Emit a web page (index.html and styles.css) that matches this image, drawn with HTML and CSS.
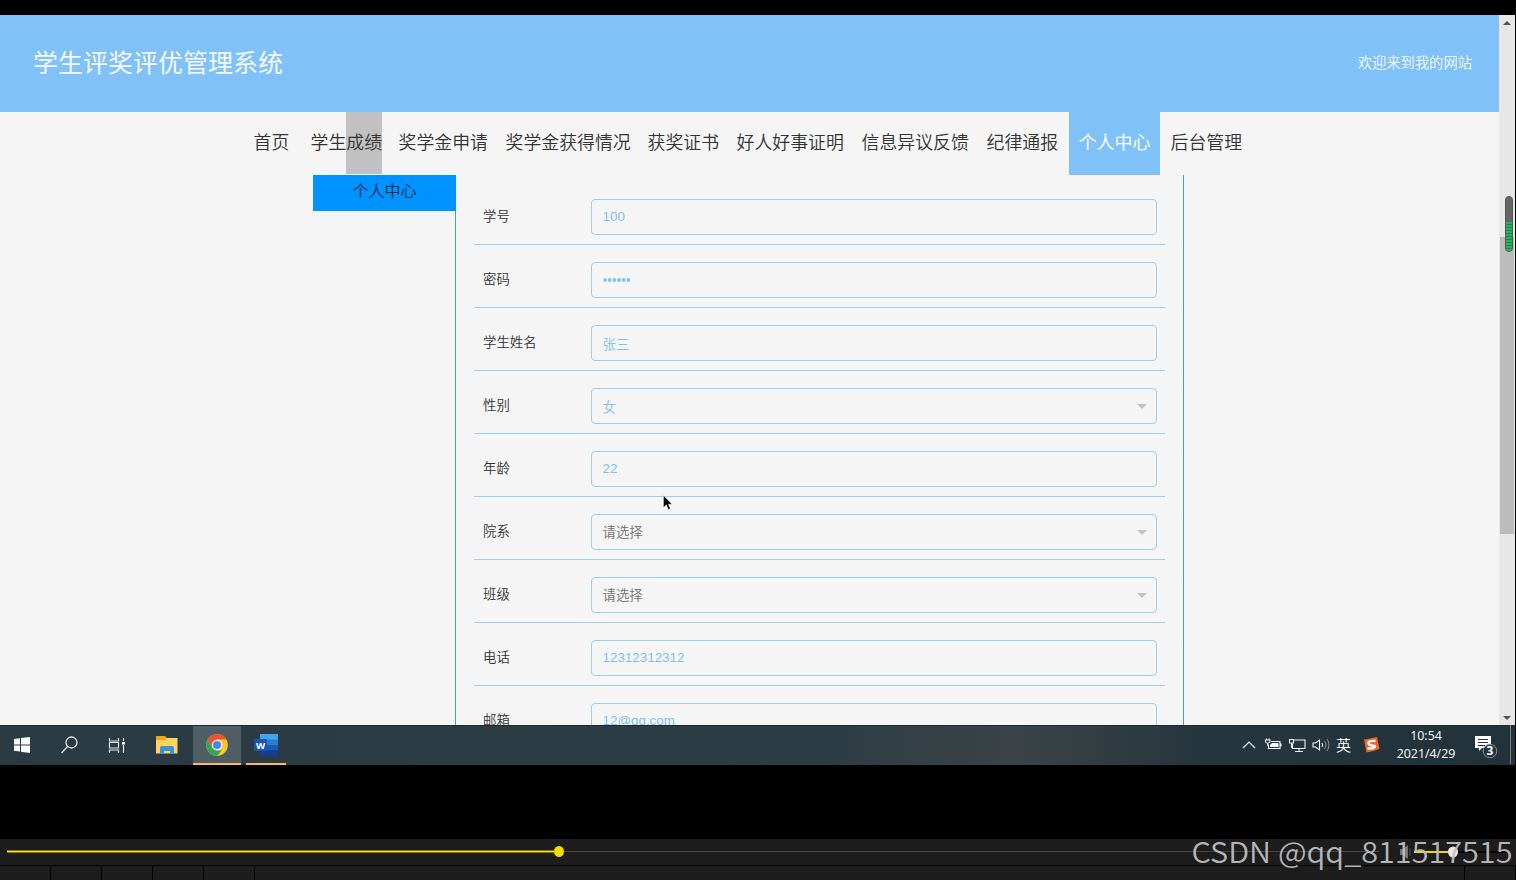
FILE: index.html
```html
<!DOCTYPE html>
<html lang="zh-CN">
<head>
<meta charset="utf-8">
<title>学生评奖评优管理系统</title>
<link rel="stylesheet" href="styles.css">
</head>
<body>
<div class="screen">
  <div class="browser">
    <div class="page">
      <header class="header"><h1 class="title">学生评奖评优管理系统</h1><span class="welcome">欢迎来到我的网站</span></header>
      <nav class="nav">
        <a>首页</a><a>学生<span class="selected">成绩</span></a><a>奖学金申请</a><a>奖学金获得情况</a><a>获奖证书</a><a>好人好事证明</a><a>信息异议反馈</a><a>纪律通报</a><a class="active">个人中心</a><a>后台管理</a>
      </nav>
      <main class="content">
        <aside class="side"><div class="side-item">个人中心</div></aside>
        <form class="form">
          <div class="row"><label>学号</label><div class="field">100</div></div>
          <div class="row"><label>密码</label><div class="field password"><svg width="29" height="6" viewBox="0 0 29 6" fill="#80c2f2"><circle cx="2" cy="3" r="1.900"/><circle cx="6.700" cy="3" r="1.900"/><circle cx="11.400" cy="3" r="1.900"/><circle cx="16.100" cy="3" r="1.900"/><circle cx="20.800" cy="3" r="1.900"/><circle cx="25.500" cy="3" r="1.900"/></svg></div></div>
          <div class="row"><label>学生姓名</label><div class="field cjk">张三</div></div>
          <div class="row"><label>性别</label><div class="field cjk select">女</div></div>
          <div class="row"><label>年龄</label><div class="field">22</div></div>
          <div class="row"><label>院系</label><div class="field cjk select empty">请选择</div></div>
          <div class="row"><label>班级</label><div class="field cjk select empty">请选择</div></div>
          <div class="row"><label>电话</label><div class="field">12312312312</div></div>
          <div class="row"><label>邮箱</label><div class="field">12@qq.com</div></div>
        </form>
      </main>
    </div>
    <div class="scrollbar">
      <svg class="arrows" width="15" height="710" viewBox="0 0 15 710"><path d="M4 10h8L8 6zM4 701h8l-4 4z" fill="#505050"/></svg>
      <div class="thumb"></div>
      <div class="meter"><div class="level"></div></div>
    </div>
  </div>
  <div class="taskbar">
    <div class="tasks">
      <div class="task start"><svg width="18" height="18" viewBox="0 0 18 18"><path d="M1 3l6-.8v6.300H1zM8 2l9-1v7.500H8zM1 9.500h6v6L1 14.700zM8 9.500h9V17l-9-1.200z" fill="#fff"/></svg></div>
      <div class="task search"><svg width="20" height="20" viewBox="0 0 20 20" fill="none" stroke="#e4e8ea" stroke-width="1.300"><circle cx="12.500" cy="7.500" r="5.500"/><path d="M8.500 11.500L2.500 18"/></svg></div>
      <div class="task view"><svg width="18" height="17" viewBox="0 0 18 17" fill="none" stroke="#dde2e5" stroke-width="1.200"><path d="M1.500 1v3h9V1M1.500 16v-3h9v3M1.500 5.500h9v5.500h-9zM15.500 1v3M15.500 8v8"/><path d="M14 5h3v2.500h-3z" fill="#fff" stroke="none"/></svg></div>
      <div class="task folder"><svg width="24" height="20" viewBox="0 0 24 20"><path d="M1 1h9l2 2h10v15H1z" fill="#e9aa19"/><path d="M1 5h9l2-2h10.500v15.500H1z" fill="#ffd45e"/><path d="M5 19v-6q0-2 2-2h10q2 0 2 2v6h-4v-3H9v3z" fill="#3993d7"/></svg></div>
      <div class="task chrome"><svg width="22" height="22" viewBox="0 0 22 22"><circle cx="11" cy="11" r="10.800" fill="#fbc926"/><path d="M11 11L6.300 13.700 1.600 5.600A10.800 10.800 0 0 1 20.400 5.600H11z" fill="#e75538"/><path d="M1.600 5.600l4.700 8.100 4.700 2.700h4.700L11 21.800A10.800 10.800 0 0 1 1.600 5.600z" fill="#35a45a"/><circle cx="11" cy="11" r="5.200" fill="#fff"/><circle cx="11" cy="11" r="4.100" fill="#4c86ed"/></svg></div>
      <div class="task word"><svg width="25" height="22" viewBox="0 0 25 22"><path d="M6 0h18v6H6z" fill="#43a5ee"/><path d="M6 5.500h18V11H6z" fill="#2c7ad2"/><path d="M6 11h18v5.500H6z" fill="#195bbd"/><path d="M6 16.500h18V22H6z" fill="#123f8d"/><rect y="5" width="13" height="12" rx="1" fill="#1856b6"/><text x="6.500" y="14.500" text-anchor="middle" font-size="9.500" font-weight="700" font-family="Open Sans, sans-serif" fill="#fff">W</text></svg></div>
    </div>
    <div class="tray">
      <svg class="tray-icons" width="90" height="20" viewBox="0 0 90 20" fill="none" stroke="#f3f4f4" stroke-width="1.100"><path d="M1 13l6-6 6 6"/><path d="M29 6.500h9v7H26.500v-4M39 8.500v3"/><path d="M30 8h6.500v4H28v-2z" fill="#fff" stroke="none"/><path d="M23.500 5h4.500v2q-2.300 2.500-4.500 0zM24.500 3.500v1.500M27 3.500v1.500M25.800 8v3"/><path d="M52 5h11v8.500H50.500V9M53 16.500h8M57 13.500v3M47.500 4.500h4v3.500h-4zM49.500 8v5"/><path d="M71 8h2.500l4-3v10l-4-3H71z"/><path d="M80 8q1.500 2 0 4" /><path d="M82.500 6q3 4 0 8M85 4q4 6 0 12" stroke="#7c898f"/></svg>
      <span class="ime">英</span>
      <svg class="sogou" width="17" height="16" viewBox="0 0 17 16"><path d="M1 2.500Q7 1.500 14 0L16.500 12q-6 2-13 3.500z" fill="#f16522"/><path d="M12.500 4Q5 3.500 5.300 6T12 9q.5 3-7.500 2.300" fill="none" stroke="#fff" stroke-width="2.300"/></svg>
      <div class="clock"><span>10:54</span><span>2021/4/29</span></div>
      <svg class="notice" width="26" height="26" viewBox="0 0 26 26"><path d="M1 4h16v12H8l-3 3v-3H1z" fill="#fff"/><path d="M4 7.500h10M4 10.500h10M4 13.500h7" stroke="#26343d"/><circle cx="16" cy="19" r="6.800" fill="#26343d" fill-opacity=".92" stroke="#8b9296"/><text x="16" y="23.300" text-anchor="middle" font-size="12" font-weight="700" font-family="Open Sans, sans-serif" fill="#fff">3</text></svg>
      <div class="peek"></div>
    </div>
  </div>
  <div class="player">
    <div class="seek"><div class="played"></div><div class="knob"></div><div class="remaining"></div><svg class="volume" width="120" height="26" viewBox="0 0 120 26"><path d="M4 10h3l5-4v14l-5-4H4z" fill="#777"/><path d="M14 9v8" stroke="#555"/><path d="M18 13h40" stroke="#f1d900" stroke-width="2"/><path d="M62 13h51" stroke="#050505" stroke-width="2"/><ellipse cx="57" cy="13" rx="5" ry="5.500" fill="#e8e8e8"/></svg></div>
    <div class="controls"><i></i><i></i><i></i><i></i><i></i><i class="wide"></i><i></i></div>
  </div>
  <svg class="cursor" width="10" height="16" viewBox="0 0 10 16"><path d="M.5.500v12l2.800-2.700 2 4.700 2-1-2-4.300H9z" fill="#080808" stroke="#fff" stroke-width=".4"/></svg>
  <div class="watermark"><svg width="326" height="46" viewBox="0 0 326 46"><text x="1.500" y="29" textLength="321" lengthAdjust="spacingAndGlyphs">CSDN @qq_811517515</text></svg></div>
</div>
</body>
</html>
```

FILE: styles.css
```css
* { box-sizing: border-box; }
body { margin: 0; background: #000; overflow: hidden; font-family: "Noto Sans CJK SC", sans-serif; }
.screen { position: relative; width: 1516px; height: 880px; padding-top: 15px; overflow: hidden; }
.browser { display: flex; width: 1515px; height: 710px; background: #f5f5f5; overflow: hidden; }
.page { width: 1499px; height: 710px; overflow: hidden; }
.header { display: flex; align-items: center; justify-content: space-between; height: 97px; padding: 0 27px 5px 33px; background: #80c2f8; color: #f4f8fb; }
.title { margin: 0; font-size: 25px; font-weight: 400; line-height: 36px; }
.welcome { font-size: 14.300px; font-weight: 350; }
.nav { display: grid; grid-template-columns: 57px 88px 107px 142px 89px 125px 125px 82.500px 91px 100px; height: 62.500px; padding-left: 253.500px; color: #333; font-size: 17.900px; font-weight: 350; line-height: 58px; }
.nav a { white-space: nowrap; }
.selected { display: inline-block; height: 61.500px; background: #c1c1c1; }
.nav .active { background: #80c2f8; color: #fff; text-align: center; font-weight: 400; }
.nav a:last-child { padding-left: 10.500px; }
.content { display: flex; height: 552px; padding-left: 313px; }
.side { width: 143px; border-right: 1px solid #3fa2d2; }
.side-item { width: 143px; height: 36px; background: #0092ff; color: #062d52; text-align: center; font-size: 16px; font-weight: 350; line-height: 31px; }
.form { width: 728px; padding: 7px 18px 0; border-right: 1px solid #3fa2d2; }
.row { display: flex; align-items: flex-end; height: 63.100px; padding: 0 8px 9px 9px; border-bottom: 1px solid #9bd0ec; }
.row label { width: 107.500px; height: 36px; color: #333; font-size: 13.400px; font-weight: 350; line-height: 32px; }
.field { position: relative; width: 566px; height: 36px; padding-left: 11px; border: 1px solid #9bd0ec; border-radius: 4px; color: #80c2f2; font: 13.400px/34px "Liberation Sans", "Noto Sans CJK SC", sans-serif; }
.cjk { font: 350 13.400px/34px "Noto Sans CJK SC", sans-serif; }
.password { display: flex; align-items: center; }
.select::after { content: ""; position: absolute; right: 9px; top: 15px; border: 5px solid transparent; border-top-color: #bfc3c5; border-bottom: 0; }
.empty { color: #707070; line-height: 33px; }
.scrollbar { position: relative; width: 16px; height: 710px; background: #e7e7e7; }
.arrows { display: block; }
.thumb { position: absolute; left: 1px; top: 222px; width: 14px; height: 297px; background: #bcbcbc; }
.meter { position: absolute; left: 6px; top: 181px; width: 8px; height: 56px; overflow: hidden; border: 1px solid #555; border-radius: 4px; background: #666; }
.level { height: 30px; margin-top: 25px; background: repeating-linear-gradient(#28b35b 0 2px, #297e4c 2px 3px); }
.taskbar { display: flex; justify-content: space-between; width: 1515px; height: 40px; background: linear-gradient(90deg, #2a3b44, #2d3d45 55%, #3b4346 67%, #26363e 79%, #22323b); border-top: 1px solid #1c2a30; color: #fff; }
.tasks, .tray { display: flex; align-items: center; }
.tray { padding-bottom: 2px; }
.task { display: flex; align-items: center; justify-content: center; width: 48px; height: 39px; padding-bottom: 1px; }
.start { width: 44px; }
.search { width: 50px; }
.view { width: 46px; }
.folder { width: 53px; }
.chrome { background: #4f5d65; border-bottom: 2px solid #ffb85c; padding-bottom: 0; }
.word { width: 40px; margin-left: 5px; border-bottom: 2px solid #ffb85c; padding-bottom: 0; }
.tray-icons { margin-right: 4px; }
.ime { font-size: 15px; line-height: 20px; font-weight: 350; }
.sogou { margin-left: 12px; }
.clock { display: flex; flex-direction: column; width: 76px; margin-left: 8px; margin-right: 1px; text-align: center; font: 12.400px/18px "Open Sans", sans-serif; }
.notice { margin-left: 9px; }
.peek { width: 5px; height: 39px; margin-left: 10px; border-left: 1px solid #758087; }
.player { height: 41px; margin-top: 74px; background: #1d1d1d; }
.seek { display: flex; align-items: center; height: 26px; padding: 0 0 1px 7px; }
.played { width: 547px; height: 3px; border: solid #807700; border-width: 1px 0; background: #ffea00; }
.knob { width: 10px; height: 11px; border-radius: 50%; background: #f4dc00; }
.remaining { width: 815px; height: 1px; background: #444; }
.volume { margin-left: 17px; }
.controls { display: flex; height: 15px; border-top: 1px solid #000; }
.controls i { width: 51px; border-right: 1px solid #000; }
.controls .wide { width: 1210px; }
.cursor { position: absolute; left: 663px; top: 495px; }
.watermark { position: absolute; left: 1190px; top: 834px; width: 326px; height: 46px; }
.watermark text { font: 350 29px "Noto Sans CJK SC", sans-serif; fill: #c0c0c0; fill-opacity: .95; }
```
